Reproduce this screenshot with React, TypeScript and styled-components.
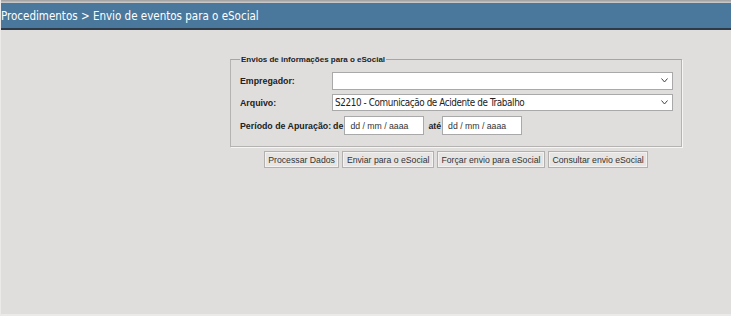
import React, { FC } from 'react';
import styled, { createGlobalStyle } from 'styled-components';

const GlobalStyle = createGlobalStyle`
    html, body {
        margin: 0;
        padding: 0;
        background: #dfdedc;
    }
    body {
        font-family: 'Liberation Sans', Arial, sans-serif;
        color: #222;
    }
`;

const Page = styled.div`
    display: flex;
    flex-direction: column;
    width: 731px;
    height: 316px;
    box-sizing: border-box;
    border-left: 1px solid #eceae8;
    border-bottom: 2px solid #eceae8;
    background: #dfdedc;
`;

const TopStrip = styled.div`
    height: 3px;
    background: linear-gradient(#9c9c9c, #cfcfcf);
`;

const Header = styled.div`
    display: flex;
    align-items: center;
    height: 25px;
    background: #4a789d;
    border-bottom: 2px solid #2d3b48;
    color: #ffffff;
    font-family: 'DejaVu Sans Condensed', 'DejaVu Sans', sans-serif;
    font-stretch: condensed;
    font-size: 11.5px;
`;

const Content = styled.div`
    display: flex;
    flex-direction: column;
    align-items: center;
    width: 452px;
    margin: 25px 0 0 229px;
`;

const Fieldset = styled.fieldset`
    box-sizing: border-box;
    width: 452px;
    margin: 0;
    padding: 8px 8px 11px 9px;
    border: 1px solid #b4b3b1;
    border-top-color: #a6a5a3;
    box-shadow: 1px 1px 0 #f6f5f3;
`;

const Legend = styled.legend`
    padding: 0 1px;
    margin-left: 0;
    font-size: 8px;
    font-weight: bold;
`;

const FormGrid = styled.div`
    display: grid;
    grid-template-columns: 92px 1fr;
    row-gap: 4px;
    align-items: center;
`;

const Label = styled.label`
    font-size: 8.8px;
    font-weight: bold;
    white-space: nowrap;
`;

const SelectWrap = styled.div`
    position: relative;
    display: flex;
`;

const Select = styled.select<{ tall?: boolean }>`
    appearance: none;
    width: 100%;
    height: ${ p => p.tall ? 18 : 17 }px;
    box-sizing: border-box;
    padding: 0 16px 0 2px;
    border: 1px solid #a9a9a9;
    border-radius: 0;
    background: #ffffff;
    color: #222;
    font-family: 'DejaVu Sans Condensed', 'DejaVu Sans', sans-serif;
    font-stretch: condensed;
    font-size: 9.8px;
    letter-spacing: -0.38px;
    outline: none;
`;

const Chevron = styled.svg`
    position: absolute;
    right: 5px;
    top: 6px;
    pointer-events: none;
`;

const PeriodRow = styled.div`
    grid-column: 1 / -1;
    display: flex;
    align-items: center;
    margin-top: 1px;
`;

const DateInput = styled.input`
    width: 80px;
    height: 19px;
    box-sizing: border-box;
    padding: 0 0 0 5px;
    border: 1px solid #a9a9a9;
    background: #ffffff;
    font-family: 'Liberation Sans', Arial, sans-serif;
    font-size: 8.7px;
    color: #333;
    outline: none;

    &::placeholder {
        color: #333;
    }
`;

const Small = styled.span<{ margin?: string }>`
    font-size: 8.8px;
    font-weight: bold;
    margin: ${ p => p.margin ?? '0' };
`;

const ButtonRow = styled.div`
    display: flex;
    gap: 3px;
    margin-top: 4px;
`;

const Button = styled.button`
    height: 17px;
    padding: 0 3.5px;
    border: 1px solid #b2b1af;
    background: #e6e5e3;
    box-shadow: inset 0 0 0 1px #f3f2f0;
    color: #333;
    font-family: 'Liberation Sans', Arial, sans-serif;
    font-size: 8.7px;
    border-radius: 0;
`;

const ArrowDown: FC = () => (
    <Chevron width='7' height='5' viewBox='0 0 7 5'>
        <path d='M0.5 0.5 L3.5 4 L6.5 0.5' fill='none' stroke='#444' strokeWidth='1' />
    </Chevron>
);

// #################################################################################

const App: FC = () => (
    <>
        <GlobalStyle />
        <Page>
            <TopStrip />
            <Header>Procedimentos &gt; Envio de eventos para o eSocial</Header>
            <Content>
                <Fieldset>
                    <Legend>Envios de informações para o eSocial</Legend>
                    <FormGrid>
                        <Label>Empregador:</Label>
                        <SelectWrap>
                            <Select tall defaultValue=''>
                                <option value=''></option>
                            </Select>
                            <ArrowDown />
                        </SelectWrap>
                        <Label>Arquivo:</Label>
                        <SelectWrap>
                            <Select defaultValue='S2210'>
                                <option value='S2210'>S2210 - Comunicação de Acidente de Trabalho</option>
                            </Select>
                            <ArrowDown />
                        </SelectWrap>
                        <PeriodRow>
                            <Label>Período de Apuração:</Label>
                            <Small margin='0 1px 0 2px'>de</Small>
                            <DateInput placeholder='dd / mm / aaaa' />
                            <Small margin='0 1px 0 4px'>até</Small>
                            <DateInput placeholder='dd / mm / aaaa' />
                        </PeriodRow>
                    </FormGrid>
                </Fieldset>
                <ButtonRow>
                    <Button>Processar Dados</Button>
                    <Button>Enviar para o eSocial</Button>
                    <Button>Forçar envio para eSocial</Button>
                    <Button>Consultar envio eSocial</Button>
                </ButtonRow>
            </Content>
        </Page>
    </>
);

export default App;
